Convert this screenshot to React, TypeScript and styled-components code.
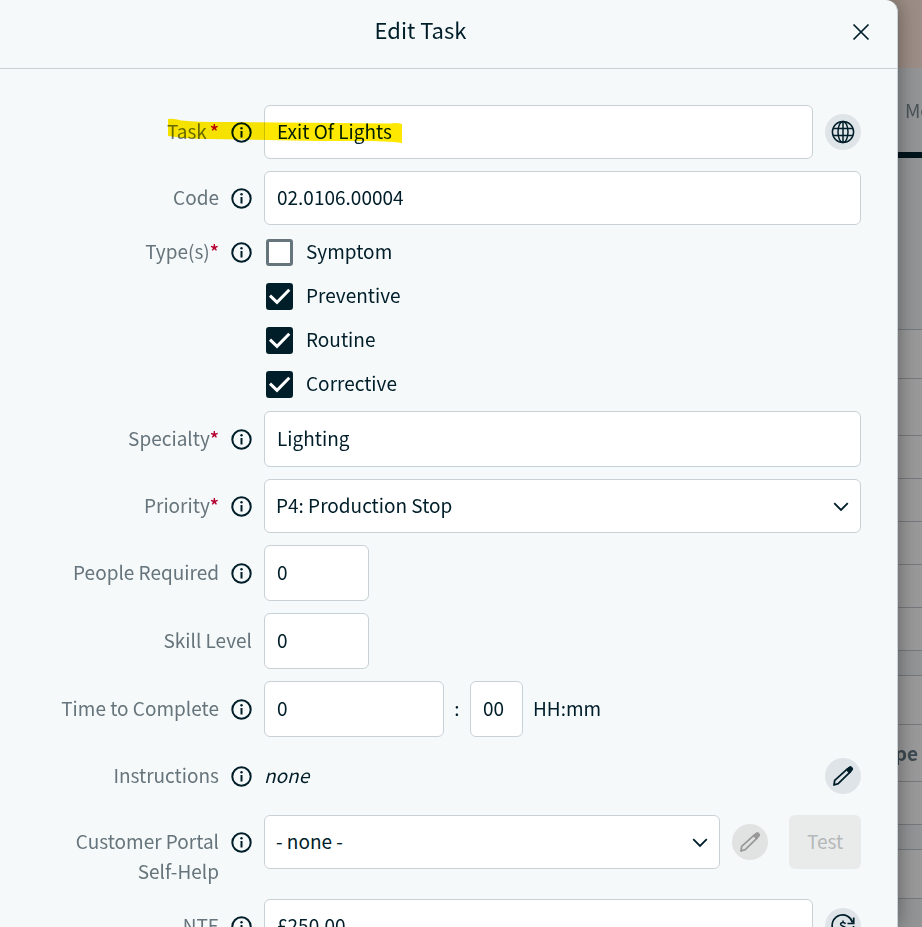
import React, { useState } from "react";
import styled, { createGlobalStyle } from "styled-components";

const font = '"Noto Sans CJK SC", "Noto Sans CJK JP", "Open Sans", sans-serif';
const ink = "#001e29";
const line = "#c8d1d6";

const GlobalStyle = createGlobalStyle`
  *, *::before, *::after { box-sizing: border-box; }
  html, body { margin: 0; height: 100%; }
  #root { height: 100%; }
  body { overflow: hidden; background: #8f9193; }
  body, button, input, select {
    font-family: ${font};
    font-size: 19px;
    line-height: 30px;
    color: ${ink};
  }
`;

const Screen = styled.div`
  position: relative;
  height: 100vh;
  overflow: hidden;
`;

const Backdrop = styled.div`
  position: absolute;
  inset: 0;
  display: flex;
  flex-direction: column;
`;

const Band = styled.div<{ $height: number; $color: string; $ruled?: boolean }>`
  display: flex;
  align-items: center;
  justify-content: flex-end;
  flex: none;
  height: ${(p) => p.$height}px;
  background: ${(p) => p.$color};
  border-bottom: ${(p) => (p.$ruled ? "1px solid #75797d" : "0")};
`;

const BandText = styled.span<{ $bold?: boolean }>`
  color: ${(p) => (p.$bold ? "#3c484f" : "#4b5357")};
  font-weight: ${(p) => (p.$bold ? 700 : 400)};
  white-space: nowrap;
  margin-right: ${(p) => (p.$bold ? 4 : -58)}px;
`;

const Dialog = styled.section`
  position: relative;
  height: 100%;
  margin-right: 24px;
  overflow: hidden;
  background: #f5f9fa;
  border-right: 1px solid ${line};
  border-top-right-radius: 12px;
  box-shadow: 0 0 20px rgba(0, 0, 0, 0.4);
`;

const Header = styled.header`
  display: flex;
  align-items: center;
  height: 69px;
  padding-right: 20px;
  border-bottom: 1px solid ${line};
`;

const Title = styled.h1`
  flex: 1;
  margin: 0;
  padding: 0 4px 10px 0;
  font-size: 22px;
  font-weight: 400;
  text-align: center;
`;

const CloseButton = styled.button`
  display: grid;
  place-items: center;
  width: 32px;
  height: 32px;
  margin-bottom: 4px;
  padding: 0;
  border: 0;
  background: none;
  cursor: pointer;
`;

const Form = styled.form`
  display: flex;
  flex-direction: column;
  gap: 12px;
  padding: 36px 36px 36px 0;
`;

const Row = styled.div`
  position: relative;
  display: grid;
  grid-template-columns: 252px minmax(0, 1fr);
  column-gap: 12px;
  align-items: start;
`;

const LabelCell = styled.div<{ $flush?: boolean; $tall?: boolean }>`
  display: flex;
  justify-content: flex-end;
  gap: 12px;
  padding-top: ${(p) => (p.$flush ? 0 : p.$tall ? 13 : 12)}px;
  color: #66747b;
  text-align: right;
`;

const LabelText = styled.label`
  max-width: 160px;
  margin-top: -1px;
  padding-bottom: 1px;
`;

const Required = styled.span<{ $spaced?: boolean }>`
  margin-left: ${(p) => (p.$spaced ? 3 : 0)}px;
  color: #b5002f;
  font-weight: 500;
`;

const InfoButton = styled.button`
  display: grid;
  place-items: center;
  flex: none;
  width: 21px;
  height: 30px;
  padding: 0;
  border: 0;
  background: none;
`;

const Controls = styled.div`
  display: flex;
  align-items: center;
  gap: 12px;
  min-height: 54px;
`;

const TextInput = styled.input<{ $width?: number; $tall?: boolean }>`
  flex: ${(p) => (p.$width ? "none" : "1")};
  width: ${(p) => (p.$width ? `${p.$width}px` : "auto")};
  min-width: 0;
  height: ${(p) => (p.$tall ? 56 : 54)}px;
  padding: 0 12px 3px;
  border: 1px solid ${line};
  border-radius: 6px;
  background: #fff;
  outline: 0;
`;

const SelectBox = styled.div`
  position: relative;
  flex: 1;
  min-width: 0;
`;

const Select = styled.select`
  appearance: none;
  width: 100%;
  height: 54px;
  padding: 0 40px 2px 11px;
  border: 1px solid ${line};
  border-radius: 6px;
  background: #fff;
  outline: 0;
`;

const Chevron = styled.svg`
  position: absolute;
  top: 23px;
  right: 12px;
  pointer-events: none;
`;

const RoundButton = styled.button`
  display: grid;
  place-items: center;
  flex: none;
  width: 36px;
  height: 36px;
  padding: 0;
  border: 0;
  border-radius: 50%;
  background: #dfe4e8;
  color: ${ink};
  &:disabled {
    background: #e1e2e2;
    color: #999;
  }
`;

const TestButton = styled.button`
  width: 72px;
  height: 54px;
  margin-left: 9px;
  padding: 0 0 2px;
  border: 0;
  border-radius: 6px;
  background: #e9ebeb;
  color: #b4b8b9;
`;

const CheckList = styled.div`
  display: flex;
  flex-direction: column;
  gap: 14px;
  padding-left: 2px;
`;

const CheckLabel = styled.label`
  display: flex;
  align-items: center;
  gap: 13px;
  height: 30px;
`;

const CheckBox = styled.span`
  display: grid;
  width: 27px;
  height: 27px;
  & > * { grid-area: 1 / 1; }
`;

const CheckInput = styled.input`
  appearance: none;
  width: 27px;
  height: 27px;
  margin: 0;
  border: 3px solid #66747b;
  border-radius: 3px;
  background: #fff;
  &:checked {
    border-color: ${ink};
    background: ${ink};
  }
`;

const Tick = styled.svg`
  pointer-events: none;
`;

const InlineText = styled.span`
  padding-bottom: 2px;
`;

const TimeParts = styled(Controls)`
  gap: 10px;
`;

const Colon = styled(InlineText)`
  width: 6px;
  text-align: center;
`;

const EmptyValue = styled.em`
  flex: 1;
  padding-bottom: 2px;
`;

const Marker = styled.svg`
  position: absolute;
  top: 12px;
  left: 168px;
  mix-blend-mode: multiply;
  pointer-events: none;
`;

const InfoIcon = () => (
  <svg width="21" height="21" viewBox="0 0 21 21" fill="none" aria-hidden="true">
    <circle cx="10.5" cy="10.5" r="9.2" stroke={ink} strokeWidth="2" />
    <path d="M10.5 9v6.5" stroke={ink} strokeWidth="2" />
    <circle cx="10.5" cy="6.2" r="1.2" fill={ink} />
  </svg>
);

const GlobeIcon = () => (
  <svg width="24" height="24" viewBox="0 0 24 24" fill="none" stroke="currentColor" strokeWidth="1.5" aria-hidden="true">
    <circle cx="12" cy="12" r="10.6" />
    <ellipse cx="12" cy="12" rx="5" ry="10.6" />
    <path d="M12 1.4v21.2M2 8.5h20M2 15.5h20" />
  </svg>
);

const PencilIcon = () => (
  <svg width="22" height="22" viewBox="0 0 22 22" fill="none" stroke="currentColor" aria-hidden="true">
    <path d="M2 20l.7-4.7L15.7 3.6l2.8 3L6.2 18.6z" strokeWidth="1.8" strokeLinejoin="round" />
    <path d="M14.2 4.7l2.9-2.7q1.6-1 2.9.4 1.3 1.5.2 2.9l-2.900 2.800z" fill="currentColor" strokeWidth="1" />
  </svg>
);

const CurrencyIcon = () => (
  <svg width="24" height="24" viewBox="0 0 24 24" fill="none" stroke="currentColor" strokeWidth="1.7" aria-hidden="true">
    <path d="M1.5 14A10.3 10.3 0 0 1 21.5 8.5M22.7 3.5v6h-6.2M22.5 12A10.3 10.3 0 0 1 3.5 18.500M1.300 22v-5h5.500" />
    <path d="M14.5 9.900C14.100 8.900 13.300 8.400 12 8.400c-1.500 0-2.400.7-2.400 1.800 0 2.600 5 1.400 5 4 0 1.200-1 1.900-2.600 1.900-1.400 0-2.300-.6-2.700-1.700M12 6.400v2M12 16v2" strokeWidth="1.5" />
  </svg>
);

const ChevronIcon = () => (
  <Chevron width="16" height="10" viewBox="0 0 16 10" fill="none" aria-hidden="true">
    <path d="M1.2 1.2L8 8l6.8-6.8" stroke={ink} strokeWidth="1.8" />
  </Chevron>
);

type FieldLabelProps = {
  id: string;
  text: string;
  required?: boolean;
  spaced?: boolean;
  info?: boolean;
  flush?: boolean;
  tall?: boolean;
};

const FieldLabel = ({ id, text, required, spaced, info = true, flush, tall }: FieldLabelProps) => (
  <LabelCell $flush={flush} $tall={tall}>
    <LabelText htmlFor={id} id={`${id}-label`}>
      {text}
      {required && <Required $spaced={spaced}>*</Required>}
    </LabelText>
    {info && (
      <InfoButton type="button" aria-label={`About ${text}`}>
        <InfoIcon />
      </InfoButton>
    )}
  </LabelCell>
);

type CheckProps = { id: string; label: string; initial: boolean };

const Check = ({ id, label, initial }: CheckProps) => {
  const [on, setOn] = useState(initial);
  return (
    <CheckLabel htmlFor={id}>
      <CheckBox>
        <CheckInput id={id} type="checkbox" checked={on} onChange={(e) => setOn(e.target.checked)} />
        {on && (
          <Tick width="27" height="27" viewBox="0 0 27 27" fill="none" aria-hidden="true">
            <path d="M4 12.7l7 6.6L23.3 6.8" stroke="#fff" strokeWidth="3" />
          </Tick>
        )}
      </CheckBox>
      <InlineText>{label}</InlineText>
    </CheckLabel>
  );
};

const types: CheckProps[] = [
  { id: "symptom", label: "Symptom", initial: false },
  { id: "preventive", label: "Preventive", initial: true },
  { id: "routine", label: "Routine", initial: true },
  { id: "corrective", label: "Corrective", initial: true },
];

const plain = "#999999";
const shaded = "#929496";

const bands: { height: number; color: string; ruled?: boolean; text?: string; bold?: boolean }[] = [
  { height: 68, color: "#9c8e86" },
  { height: 84, color: shaded, text: "Modules" },
  { height: 6, color: "#00131b" },
  { height: 172, color: shaded, ruled: true },
  { height: 49, color: plain, ruled: true },
  { height: 57, color: plain, ruled: true },
  { height: 43, color: plain, ruled: true },
  { height: 43, color: plain, ruled: true },
  { height: 43, color: plain, ruled: true },
  { height: 43, color: plain, ruled: true },
  { height: 43, color: plain, ruled: true },
  { height: 25, color: shaded, ruled: true },
  { height: 49, color: plain, ruled: true },
  { height: 57, color: plain, ruled: true, text: "Type", bold: true },
  { height: 43, color: plain, ruled: true },
  { height: 25, color: shaded, ruled: true },
  { height: 49, color: plain, ruled: true },
  { height: 43, color: shaded },
];

export default function App() {
  return (
    <>
      <GlobalStyle />
      <Screen>
        <Backdrop aria-hidden="true">
          {bands.map((band, i) => (
            <Band key={i} $height={band.height} $color={band.color} $ruled={band.ruled}>
              {band.text && <BandText $bold={band.bold}>{band.text}</BandText>}
            </Band>
          ))}
        </Backdrop>
        <Dialog role="dialog" aria-labelledby="dialog-title">
          <Header>
            <Title id="dialog-title">Edit Task</Title>
            <CloseButton type="button" aria-label="Close">
              <svg width="18" height="18" viewBox="0 0 18 18" fill="none" aria-hidden="true">
                <path d="M1.5 1.5l15 15M16.5 1.5l-15 15" stroke={ink} strokeWidth="1.7" />
              </svg>
            </CloseButton>
          </Header>
          <Form onSubmit={(e) => e.preventDefault()}>
            <Row>
              <FieldLabel id="task" text="Task" required spaced />
              <Controls>
                <TextInput id="task" defaultValue="Exit Of Lights" />
                <RoundButton type="button" aria-label="Translations">
                  <GlobeIcon />
                </RoundButton>
              </Controls>
              <Marker width="234" height="28" viewBox="0 0 234 28" aria-hidden="true">
                <path d="M0 2Q6 1 13 3.5Q28 5 60 5L222 6.5Q229 5.5 234 7V26L226 25L205 24L150 24L100 23L40 22Q16 21.5 8 20L0 19z" fill="#ffe800" />
              </Marker>
            </Row>
            <Row>
              <FieldLabel id="code" text="Code" />
              <Controls>
                <TextInput id="code" defaultValue="02.0106.00004" />
              </Controls>
            </Row>
            <Row>
              <FieldLabel id="symptom" text="Type(s)" required flush />
              <CheckList role="group" aria-labelledby="symptom-label">
                {types.map((t) => (
                  <Check key={t.id} {...t} />
                ))}
              </CheckList>
            </Row>
            <Row>
              <FieldLabel id="specialty" text="Specialty" required tall />
              <Controls>
                <TextInput id="specialty" $tall defaultValue="Lighting" />
              </Controls>
            </Row>
            <Row>
              <FieldLabel id="priority" text="Priority" required />
              <Controls>
                <SelectBox>
                  <Select id="priority">
                    <option>P4: Production Stop</option>
                  </Select>
                  <ChevronIcon />
                </SelectBox>
              </Controls>
            </Row>
            <Row>
              <FieldLabel id="people" text="People Required" tall />
              <Controls>
                <TextInput id="people" $tall $width={105} defaultValue="0" />
              </Controls>
            </Row>
            <Row>
              <FieldLabel id="skill" text="Skill Level" info={false} tall />
              <Controls>
                <TextInput id="skill" $tall $width={105} defaultValue="0" />
              </Controls>
            </Row>
            <Row>
              <FieldLabel id="hours" text="Time to Complete" tall />
              <TimeParts>
                <TextInput id="hours" $tall $width={180} defaultValue="0" />
                <Colon>:</Colon>
                <TextInput aria-label="Minutes" $tall $width={53} defaultValue="00" />
                <InlineText>HH:mm</InlineText>
              </TimeParts>
            </Row>
            <Row>
              <FieldLabel id="instructions" text="Instructions" />
              <Controls>
                <EmptyValue>none</EmptyValue>
                <RoundButton id="instructions" type="button" aria-label="Edit instructions">
                  <PencilIcon />
                </RoundButton>
              </Controls>
            </Row>
            <Row>
              <FieldLabel id="portal" text="Customer Portal Self-Help" />
              <Controls>
                <SelectBox>
                  <Select id="portal">
                    <option>- none -</option>
                  </Select>
                  <ChevronIcon />
                </SelectBox>
                <RoundButton type="button" aria-label="Edit self-help" disabled>
                  <PencilIcon />
                </RoundButton>
                <TestButton type="button" disabled>
                  Test
                </TestButton>
              </Controls>
            </Row>
            <Row>
              <FieldLabel id="nte" text="NTE" />
              <Controls>
                <TextInput id="nte" defaultValue="£250.00" />
                <RoundButton type="button" aria-label="Change currency">
                  <CurrencyIcon />
                </RoundButton>
              </Controls>
            </Row>
          </Form>
        </Dialog>
      </Screen>
    </>
  );
}
